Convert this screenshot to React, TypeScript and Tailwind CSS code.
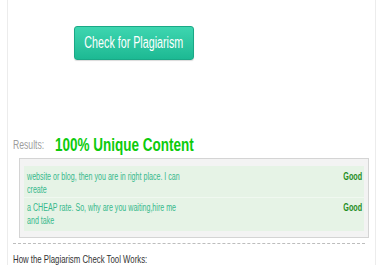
const rows = [
  {
    lines: ["website or blog, then you are in right place. I can", "create"],
    status: "Good",
  },
  {
    lines: ["a CHEAP rate. So, why are you waiting,hire me", "and take"],
    status: "Good",
  },
];

export default function App() {
  return (
    <div className="h-[265px] w-[380px] overflow-hidden bg-white font-['Liberation_Sans',Arial,sans-serif]">
      <div className="ml-[7px] mr-[4px] flex h-full flex-col border-x border-[#ececec] pl-[5px] pr-[5px]">
        <div className="pl-[61px] pt-[26px]">
          <button className="flex h-[34px] w-[120px] items-center justify-center rounded-[3px] border border-[#1aa886] bg-gradient-to-b from-[#3dd6b0] to-[#1cb993] shadow-[0_1px_1px_rgba(0,0,0,0.15)]">
            <span className="inline-block whitespace-nowrap text-[16px] leading-none text-white [scale:0.67_1]">
              Check for Plagiarism
            </span>
          </button>
        </div>

        <div className="mt-[76px] flex h-[18px] items-center">
          <span className="inline-block w-[42px] origin-left whitespace-nowrap text-[12px] text-[#9d9d9d] [scale:0.72_1]">
            Results:
          </span>
          <span className="inline-block origin-left whitespace-nowrap text-[19px] font-bold text-[#0ccb0c] [scale:0.71_1]">
            100% Unique Content
          </span>
        </div>

        <div className="ml-[6px] mr-[1px] mt-[4px] border border-[#d4d4d4] bg-[#f3f3f3] px-[4px] pb-[6px] pt-[7px]">
          {rows.map((row, i) => (
            <div
              key={i}
              className={`flex justify-between bg-[#e6f3e6] pl-[3px] pr-[2px] ${
                i === 0 ? "h-[32px] pt-[5px] border-b border-[#f0f8f0]" : "h-[33px] pt-[4px]"
              }`}
            >
              <div className="flex flex-col">
                {row.lines.map((line) => (
                  <span
                    key={line}
                    className="inline-block origin-left whitespace-nowrap text-[10px] leading-[12.5px] text-[#36b98c] [scale:0.71_1]"
                  >
                    {line}
                  </span>
                ))}
              </div>
              <span className="inline-block origin-right whitespace-nowrap text-[10px] font-bold leading-[12.5px] text-[#1e8c1e] [scale:0.72_1]">
                {row.status}
              </span>
            </div>
          ))}
        </div>

        <div className="mr-[5px] mt-[5px] border-t border-dashed border-[#bdbdbd]" />

        <div className="mt-[8px] text-[11px] leading-[14px]">
          <span className="inline-block origin-left whitespace-nowrap text-[#333] [scale:0.71_1]">
            How the Plagiarism Check Tool Works:
          </span>
        </div>
      </div>
    </div>
  );
}
